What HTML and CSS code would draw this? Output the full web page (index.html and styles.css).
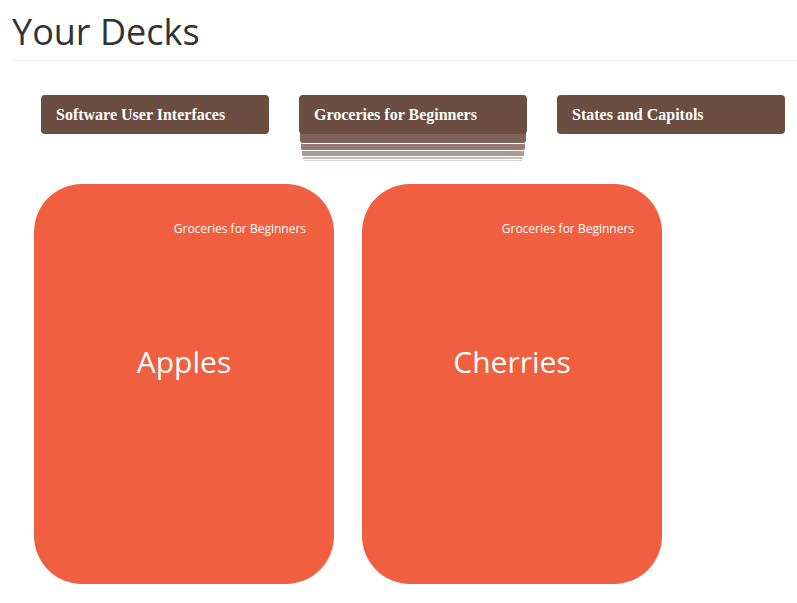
FILE: index.html
```html
<!DOCTYPE html>
<html lang="en">
<head>
<meta charset="utf-8">
<title>Your Decks</title>
<link rel="stylesheet" href="styles.css">
</head>
<body>
<header class="page-header">
  <h1 class="page-title">Your Decks</h1>
</header>
<nav class="deck-list">
  <div class="deck">Software User Interfaces</div>
  <div class="deck deck-active">Groceries for Beginners</div>
  <div class="deck">States and Capitols</div>
</nav>
<main class="card-list">
  <div class="card">
    <div class="card-deck">Groceries for Beginners</div>
    <div class="card-word">Apples</div>
  </div>
  <div class="card">
    <div class="card-deck">Groceries for Beginners</div>
    <div class="card-word">Cherries</div>
  </div>
</main>
</body>
</html>
```

FILE: styles.css
```css
html, body {
  margin: 0;
  padding: 0;
  background: #fff;
}

body {
  font-family: "Open Sans", "Noto Sans", sans-serif;
  color: #333;
}

.page-header {
  margin-left: 12px;
  padding-top: 12px;
  padding-bottom: 8px;
  border-bottom: 1px solid #eee;
}

.page-title {
  margin: 0;
  font-size: 36px;
  line-height: 40px;
  font-weight: 400;
  color: #333;
}

.deck-list {
  display: flex;
  gap: 30px;
  margin-top: 34px;
  padding-left: 41px;
}

.deck {
  width: 228px;
  height: 39px;
  box-sizing: border-box;
  padding: 1px 15px 0;
  display: flex;
  align-items: center;
  background: #6b4d42;
  border-radius: 4px;
  color: #fff;
  font-family: "Liberation Serif", "Times New Roman", serif;
  font-weight: 700;
  font-size: 16px;
}

.deck-active {
  box-shadow:
    0 10px 0 -1px #7f6158,
    0 11px 0 -1px #fff,
    0 18px 0 -2px #937a72,
    0 19px 0 -2px #fff,
    0 25px 0 -3px #ab9a94,
    0 26px 0 -3px #fff,
    0 29px 0 -4px #c9bdb9,
    0 30px 0 -4px #fff,
    0 32px 0 -5px #ddd4d1;
}

.card-list {
  display: flex;
  gap: 28px;
  margin-top: 50px;
  padding-left: 34px;
}

.card {
  width: 300px;
  height: 400px;
  box-sizing: border-box;
  padding: 36px 28px 0;
  background: #f05f40;
  border-radius: 48px;
  color: #fff;
  display: flex;
  flex-direction: column;
}

.card-deck {
  text-align: right;
  font-size: 12px;
  line-height: 17px;
}

.card-word {
  margin-top: 104px;
  text-align: center;
  font-size: 30px;
  line-height: 42px;
}
```
